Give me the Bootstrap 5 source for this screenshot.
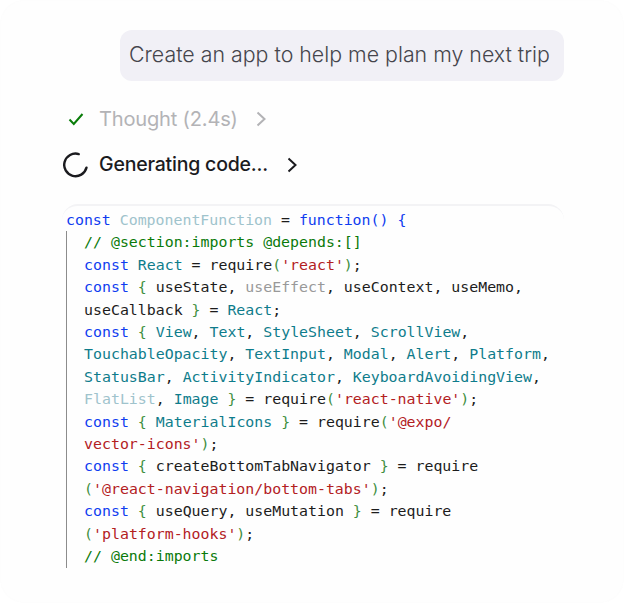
<!DOCTYPE html>
<html lang="en">
<head>
<meta charset="utf-8">
<title>Chat</title>
<link href="https://cdn.jsdelivr.net/npm/bootstrap@5.3.0/dist/css/bootstrap.min.css" rel="stylesheet">
<style>
html,body{margin:0;height:100%;background:#fff;}
.stage{width:624px;height:603px;background:#fefefe;border:1px solid #fdfdfd;border-radius:24px;padding:29px 59px 0 61px;font-family:Inter,"Noto Sans",sans-serif;overflow:hidden;}
.bubble{margin-left:58px;height:51px;width:444px;background:#f1f0f6;border-radius:12px;color:#45454c;font-size:21.35px;font-weight:300;line-height:49px;padding-left:9px;white-space:nowrap;}
.step{height:46px;font-size:20.1px;letter-spacing:-.2px;}
.step-icon{width:28px;flex:none;}
.step-done{color:#b3b3b6;font-weight:400;margin-top:15px;}
.step-run{color:#1b1b1f;font-weight:500;font-size:19.5px;}
.label-gap{margin-left:9px;}
.chev-done{margin-left:17px;}
.chev-run{margin-left:18px;}
.codebox{margin-top:16px;height:365px;border-top:2px solid #f3f3f5;border-radius:16px 16px 0 0;padding:3px 0 0 4px;font-family:"DejaVu Sans Mono","Liberation Mono",monospace;font-size:14.88px;line-height:22.4px;color:#1c1c1c;white-space:pre;}
.indent{border-left:1px solid #8c8c8c;padding-left:17.6px;margin-left:-.5px;}
.k{color:#0f3cf0}.c{color:#9fc3cc}.t{color:#0e7c8b}.f{color:#9fc3cc}.u{color:#999}.g{color:#0a7a0a}.b{color:#3f8f3f}.s{color:#b3201f}
</style>
</head>
<body>
<div class="stage">
  <div class="bubble">Create an app to help me plan my next trip</div>
  <div class="step step-done d-flex align-items-center">
    <div class="step-icon d-flex justify-content-center"><svg width="16" height="14" viewBox="0 0 16 14"><path d="M1.5 7.5 5.8 12 14.5 2" fill="none" stroke="#0a7d0a" stroke-width="2"/></svg></div>
    <span class="label-gap">Thought (2.4s)</span>
    <svg class="chev-done" width="12" height="16" viewBox="0 0 12 16"><path d="M2.500 1.500 9.500 8l-7 6.500" fill="none" stroke="#b3b3b6" stroke-width="2"/></svg>
  </div>
  <div class="step step-run d-flex align-items-center">
    <div class="step-icon d-flex justify-content-center"><svg width="26" height="26" viewBox="0 0 26 26"><path d="M23.800 13A11.300 11.300 0 1 1 13 1.700" fill="none" stroke="#1b1b1f" stroke-width="2.400" stroke-linecap="round" transform="rotate(14 13 13)"/></svg></div>
    <span class="label-gap">Generating code...</span>
    <svg class="chev-run" width="12" height="16" viewBox="0 0 12 16"><path d="M2.500 1.500 9.500 8l-7 6.500" fill="none" stroke="#1b1b1f" stroke-width="2"/></svg>
  </div>
  <div class="codebox"><div><span class="k">const</span> <span class="c">ComponentFunction</span> = <span class="k">function() {</span></div><div class="indent"><div><span class="g">// @section:imports @depends:[]</span></div><div><span class="k">const</span> <span class="t">React</span> = require<span class="b">(</span><span class="s">'react'</span><span class="b">)</span>;</div><div><span class="k">const</span> <span class="b">{</span> useState, <span class="u">useEffect</span>, useContext, useMemo,</div><div>useCallback <span class="b">}</span> = <span class="t">React</span>;</div><div><span class="k">const</span> <span class="b">{</span> <span class="t">View</span>, <span class="t">Text</span>, <span class="t">StyleSheet</span>, <span class="t">ScrollView</span>,</div><div><span class="t">TouchableOpacity</span>, <span class="t">TextInput</span>, <span class="t">Modal</span>, <span class="t">Alert</span>, <span class="t">Platform</span>,</div><div><span class="t">StatusBar</span>, <span class="t">ActivityIndicator</span>, <span class="t">KeyboardAvoidingView</span>,</div><div><span class="f">FlatList</span>, <span class="t">Image</span> <span class="b">}</span> = require<span class="b">(</span><span class="s">'react-native'</span><span class="b">)</span>;</div><div><span class="k">const</span> <span class="b">{</span> <span class="t">MaterialIcons</span> <span class="b">}</span> = require<span class="b">(</span><span class="s">'@expo/</span></div><div><span class="s">vector-icons'</span><span class="b">)</span>;</div><div><span class="k">const</span> <span class="b">{</span> createBottomTabNavigator <span class="b">}</span> = require</div><div><span class="b">(</span><span class="s">'@react-navigation/bottom-tabs'</span><span class="b">)</span>;</div><div><span class="k">const</span> <span class="b">{</span> useQuery, useMutation <span class="b">}</span> = require</div><div><span class="b">(</span><span class="s">'platform-hooks'</span><span class="b">)</span>;</div><div><span class="g">// @end:imports</span></div></div></div>
</div>
<script src="https://cdn.jsdelivr.net/npm/bootstrap@5.3.0/dist/js/bootstrap.bundle.min.js"></script>
</body>
</html>
